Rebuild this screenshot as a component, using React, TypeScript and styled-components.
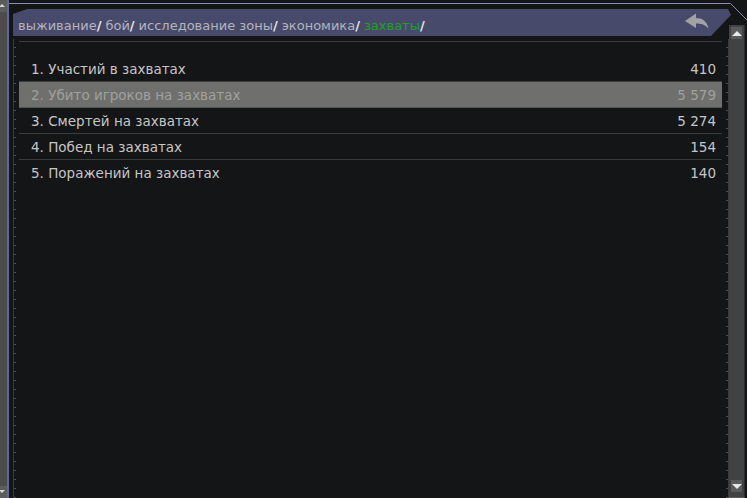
import React from 'react';
import styled, { createGlobalStyle } from 'styled-components';

const GlobalStyle = createGlobalStyle`
  html, body {
    margin: 0;
    padding: 0;
    background: #141517;
  }
  body {
    font-family: "DejaVu Sans", Verdana, sans-serif;
  }
`;

const crumbs = ['выживание', 'бой', 'исследование зоны', 'экономика', 'захваты'];

const stats = [
  { title: 'Участий в захватах', value: '410' },
  { title: 'Убито игроков на захватах', value: '5 579' },
  { title: 'Смертей на захватах', value: '5 274' },
  { title: 'Побед на захватах', value: '154' },
  { title: 'Поражений на захватах', value: '140' },
];

/** page shell */
const Screen = styled.div`
  display: flex;
  width: 747px;
  height: 498px;
  overflow: hidden;
  background: #141517;
`;

/** neighbouring window scrollbar, cut at the left edge */
const SideBar = styled.div`
  display: flex;
  flex-direction: column;
  justify-content: space-between;
  width: 7px;
  background: #4b4b4b;
`;

const SideButton = styled.div<{ $down?: boolean }>`
  position: relative;
  height: 12px;
  background: #5c5c5c;
  &::after {
    content: '';
    position: absolute;
    left: -1px;
    top: 4px;
    border-left: 3px solid transparent;
    border-right: 3px solid transparent;
    ${({ $down }) => ($down ? 'border-top: 3px solid #d8d8d8;' : 'border-bottom: 3px solid #d8d8d8;')}
  }
`;

const Edge = styled.div`
  width: 2px;
  background: #60679a;
`;

const Window = styled.div`
  flex: 1;
  display: grid;
  grid-template-columns: 1fr 18px;
  min-width: 0;
`;

const Main = styled.div`
  display: flex;
  flex-direction: column;
  min-width: 0;
`;

const TopRule = styled.div`
  height: 4px;
  margin-top: 3px;
  margin-bottom: 1px;
  border-top: 1px solid #8a8fb0;
`;

const Tab = styled.div`
  display: flex;
  align-items: center;
  justify-content: space-between;
  height: 27px;
  margin-left: 4px;
  margin-right: -2px;
  padding: 0 22px 0 5px;
  background: #484a6b;
  clip-path: polygon(0 5px, 14px 0, calc(100% - 3px) 0, 100% 6px, calc(100% - 20px) 100%, 0 100%);
`;

const Crumbs = styled.div`
  display: flex;
  align-items: baseline;
  padding-top: 6px;
  font-size: 13px;
  white-space: nowrap;
`;

const Crumb = styled.span<{ $active?: boolean }>`
  color: ${({ $active }) => ($active ? '#1fa01f' : '#b3b4bd')};
`;

const Slash = styled.span`
  color: #e6e6e6;
  margin-right: 4px;
  font-weight: bold;
`;

const BackButton = styled.button`
  display: flex;
  align-items: center;
  padding: 0;
  margin-top: -3px;
  border: 0;
  background: none;
  cursor: pointer;
`;

const Body = styled.div`
  flex: 1;
  display: flex;
  padding-top: 3px;
  min-height: 0;
`;

const Ruler = styled.div<{ $side: 'left' | 'right' }>`
  width: 4px;
  ${({ $side }) => ($side === 'left' ? 'margin-left: 4px;' : 'margin-left: 2px;')}
  ${({ $side }) => ($side === 'left' ? 'border-left: 1px solid #3a3b3d;' : 'border-right: 1px solid #3a3b3d;')}
  background-image: repeating-linear-gradient(to bottom, transparent 0 8px, #4c4d50 8px 9px);
  background-size: 2px 100%;
  background-repeat: no-repeat;
  background-position: ${({ $side }) => ($side === 'left' ? 'left top' : 'right top')};
`;

const Content = styled.div`
  flex: 1;
  min-width: 0;
  margin-top: 2px;
  margin-left: 1px;
  padding-top: 14px;
  border-top: 1px solid #3a3b3d;
`;

const Row = styled.div<{ $selected?: boolean }>`
  display: flex;
  align-items: center;
  justify-content: space-between;
  height: 25px;
  padding: 0 6px 0 12px;
  border-bottom: 1px solid ${({ $selected }) => ($selected ? '#55564f' : '#3a3b3d')};
  background: ${({ $selected }) => ($selected ? '#6f706d' : 'transparent')};
  color: ${({ $selected }) => ($selected ? '#a0a19e' : '#c6c6c6')};
  font-size: 13.5px;
  &:last-child {
    border-bottom-color: transparent;
  }
`;

const Side = styled.div`
  display: flex;
  flex-direction: column;
`;

const Corner = styled.svg`
  display: block;
  flex-shrink: 0;
`;

const Track = styled.div`
  flex: 1;
  display: flex;
  flex-direction: column;
  justify-content: space-between;
  width: 16px;
  padding: 2px 0 5px;
  box-sizing: border-box;
  background: #424242;
  border-right: 1px solid #2e2e2e;
  border-bottom: 1px solid #5a5a5a;
`;

const Arrow = styled.div<{ $down?: boolean }>`
  display: flex;
  align-items: center;
  justify-content: center;
  width: 11px;
  height: 12px;
  margin-left: 2px;
  background: #5b5b5b;
  &::after {
    content: '';
    border-left: 5px solid transparent;
    border-right: 5px solid transparent;
    ${({ $down }) => ($down ? 'border-top: 5px solid #e8e8e8;' : 'border-bottom: 5px solid #e8e8e8;')}
  }
`;

const BackIcon = () => (
  <svg width="24" height="16" viewBox="0 0 24 16">
    <path d="M0 8 L11 0.5 L11 5 C17 5 22 8 23.5 15.5 C20 11.5 16 10.5 11 10.5 L11 15 Z" fill="#a2a2a4" />
  </svg>
);

export default function App() {
  return (
    <>
      <GlobalStyle />
      <Screen>
        <SideBar>
          <SideButton />
          <SideButton $down />
        </SideBar>
        <Edge />
        <Window>
          <Main>
            <TopRule />
            <Tab>
              <Crumbs>
                {crumbs.map((c, i) => (
                  <React.Fragment key={c}>
                    <Crumb $active={i === crumbs.length - 1}>{c}</Crumb>
                    <Slash>/</Slash>
                  </React.Fragment>
                ))}
              </Crumbs>
              <BackButton>
                <BackIcon />
              </BackButton>
            </Tab>
            <Body>
              <Ruler $side="left" />
              <Content>
                {stats.map((s, i) => (
                  <Row key={s.title} $selected={i === 1}>
                    <span>{i + 1}. {s.title}</span>
                    <span>{s.value}</span>
                  </Row>
                ))}
              </Content>
              <Ruler $side="right" />
            </Body>
          </Main>
          <Side>
            <Corner width="18" height="25" viewBox="0 0 18 25">
              <polyline points="0,3.5 1.5,3.5 18,20" fill="none" stroke="#8a8fb0" strokeWidth="1" />
            </Corner>
            <Track>
              <Arrow />
              <Arrow $down />
            </Track>
          </Side>
        </Window>
      </Screen>
    </>
  );
}
